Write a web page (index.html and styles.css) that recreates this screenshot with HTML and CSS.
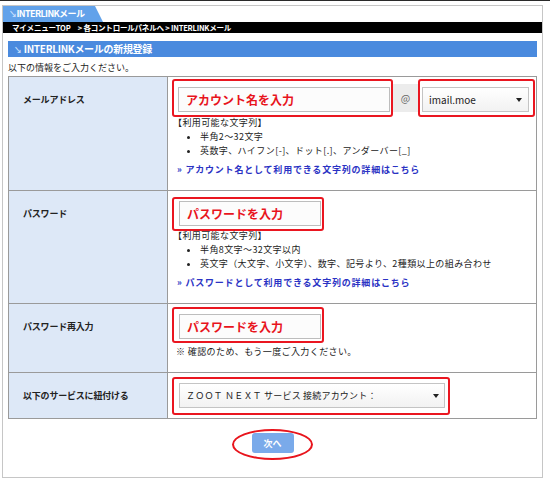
FILE: index.html
```html
<!DOCTYPE html>
<html lang="ja">
<head>
<meta charset="utf-8">
<title>INTERLINKメール</title>
<link rel="stylesheet" href="styles.css">
</head>
<body>
<div class="frame">
  <div class="tab"><span class="arr">↘</span>INTERLINKメール</div>
  <div class="crumb">マイメニューTOP　&gt; 各コントロールパネルへ &gt; INTERLINKメール</div>
  <div class="content">
    <h2 class="head"><span class="arr">↘</span> INTERLINKメールの新規登録</h2>
    <p class="intro">以下の情報をご入力ください。</p>
    <table class="form">
      <colgroup><col class="c-label"><col></colgroup>
      <tr class="r1">
        <th>メールアドレス</th>
        <td>
          <div class="group">
            <span class="red red-acc"><span class="inp inp-acc">アカウント名を入力</span></span>
            <span class="addon">@</span>
            <span class="red red-dom"><span class="select sel-dom">imail.moe<i class="caret"></i></span></span>
          </div>
          <div class="rules">【利用可能な文字列】</div>
          <ul class="list">
            <li>半角2～32文字</li>
            <li>英数字、ハイフン[-]、ドット[.]、アンダーバー[_]</li>
          </ul>
          <a class="more" href="#">» アカウント名として利用できる文字列の詳細はこちら</a>
        </td>
      </tr>
      <tr class="r2">
        <th>パスワード</th>
        <td>
          <span class="red red-pw"><span class="inp inp-pw">パスワードを入力</span></span>
          <div class="rules">【利用可能な文字列】</div>
          <ul class="list">
            <li>半角8文字～32文字以内</li>
            <li>英文字（大文字、小文字）、数字、記号より、2種類以上の組み合わせ</li>
          </ul>
          <a class="more" href="#">» パスワードとして利用できる文字列の詳細はこちら</a>
        </td>
      </tr>
      <tr class="r3">
        <th>パスワード再入力</th>
        <td>
          <span class="red red-pw2"><span class="inp inp-pw">パスワードを入力</span></span>
          <div class="note">※ 確認のため、もう一度ご入力ください。</div>
        </td>
      </tr>
      <tr class="r4">
        <th>以下のサービスに紐付ける</th>
        <td>
          <span class="red red-svc"><span class="select sel-svc">ＺＯＯＴ ＮＥＸＴ サービス 接続アカウント：<i class="caret"></i></span></span>
        </td>
      </tr>
    </table>
    <div class="actions">
      <span class="btnwrap"><button class="next" type="button">次へ</button><span class="ring"></span></span>
    </div>
  </div>
</div>
</body>
</html>
```
FILE: styles.css
```css
html, body {
  margin: 0;
  padding: 0;
  background: #fff;
}
body {
  border-top: 1px solid #2a2a2a;
  font-family: "Noto Sans CJK JP", "Noto Sans", sans-serif;
  color: #222;
}
.frame {
  margin: 4px 7px 0 2px;
  height: 473px;
  box-sizing: border-box;
  border: 1px solid #c6c6c6;
}
.tab {
  width: 100px;
  height: 16px;
  line-height: 16px;
  background: #62a2ea;
  color: #fff;
  font-size: 9px;
  font-weight: bold;
  padding-left: 6px;
  box-sizing: border-box;
  clip-path: polygon(0 0, 92px 0, 100% 100%, 0 100%);
  letter-spacing: -0.6px;
}
.arr {
  color: #cfe3ff;
  font-size: 8px;
}
.crumb {
  height: 11px;
  line-height: 11px;
  background: #000;
  color: #fff;
  font-size: 7.5px;
  font-weight: bold;
  padding-left: 9px;
  white-space: nowrap;
  letter-spacing: -0.2px;
}
.content {
  padding: 0 5px;
}
.head {
  margin: 8px 0 0;
  height: 16px;
  line-height: 16px;
  background: #4a8ade;
  color: #fff;
  font-size: 10px;
  font-weight: bold;
  padding-left: 6px;
  letter-spacing: -0.3px;
}
.intro {
  margin: 0;
  padding: 5px 0 2px;
  font-size: 9px;
  line-height: 12px;
}
.form {
  width: 100%;
  table-layout: fixed;
  border-collapse: collapse;
  border: 1px solid #8c8c8c;
}
.c-label {
  width: 159px;
}
.form th, .form td {
  border: 1px solid #9a9a9a;
  vertical-align: top;
}
.form th {
  padding: 17px 0 0 14px;
  text-align: left;
  background: #dde8f7;
  font-size: 9px;
  line-height: 12px;
  font-weight: bold;
  color: #222;
  letter-spacing: -0.2px;
  white-space: nowrap;
}
.form td {
  padding: 2px 2px 13px 4px;
  font-size: 9px;
  line-height: 14px;
  letter-spacing: 0.4px;
}
.form .r4 td {
  padding-bottom: 3px;
}
.group {
  display: flex;
  align-items: center;
}
.red {
  display: inline-flex;
  flex-shrink: 0;
  border: 2px solid #ea1620;
  border-radius: 3px;
  vertical-align: top;
  letter-spacing: 0;
}
.red-acc { padding: 6px 1px 3px 4px; }
.red-dom { padding: 6px 4px 3px 2px; }
.red-pw { padding: 2px 1px 3px 5px; margin-top: 4px; }
.red-pw2 { padding: 5px 1px 2px 5px; margin-top: 1px; }
.red-svc { padding: 4px 3px 5px 5px; margin-top: 2px; }
.inp {
  height: 25px;
  line-height: 23px;
  box-sizing: border-box;
  border: 1px solid #bdbdbd;
  background: #fcfcfc;
  color: #e8141c;
  font-size: 12px;
  font-weight: bold;
  padding-left: 7px;
  white-space: nowrap;
}
.inp-acc { width: 212px; }
.inp-pw { width: 142px; }
.addon {
  flex-shrink: 0;
  width: 25px;
  height: 28px;
  line-height: 28px;
  background: #ececec;
  color: #666;
  font-size: 10px;
  text-align: center;
  letter-spacing: 0;
}
.select {
  position: relative;
  height: 25px;
  line-height: 23px;
  box-sizing: border-box;
  border: 1px solid #c4c4c4;
  background: linear-gradient(#ffffff, #f2f2f2);
  color: #222;
  padding-left: 6px;
  white-space: nowrap;
}
.sel-dom {
  width: 107px;
  font-size: 10px;
}
.sel-svc {
  width: 266px;
  font-size: 9px;
  letter-spacing: 0.2px;
}
.caret {
  position: absolute;
  right: 6px;
  top: 10px;
  width: 0;
  height: 0;
  border-left: 3px solid transparent;
  border-right: 3px solid transparent;
  border-top: 4px solid #222;
}
.sel-svc .caret { right: 5px; }
.rules {
  margin-top: -1px;
  padding-left: 1px;
}
.r2 .rules { margin-top: -2px; }
.list {
  margin: 0;
  padding-left: 28px;
  list-style: disc;
}
.more {
  display: block;
  margin-top: 5px;
  padding-left: 5px;
  color: #2b33c4;
  text-decoration: none;
  font-weight: bold;
  letter-spacing: 0.8px;
}
.note {
  margin-top: 2px;
  padding-left: 4px;
}
.actions {
  display: flex;
  justify-content: center;
  margin-top: 14px;
}
.btnwrap {
  position: relative;
  display: inline-block;
}
.next {
  display: block;
  width: 42px;
  height: 20px;
  border: none;
  border-radius: 3px;
  background: #7aaaea;
  color: #fff;
  font-family: "Noto Sans CJK JP", sans-serif;
  font-size: 9px;
  font-weight: bold;
  padding: 0;
}
.ring {
  position: absolute;
  left: -20px;
  top: -4px;
  width: 81px;
  height: 31px;
  box-sizing: border-box;
  border: 2px solid #e8141c;
  border-radius: 50%;
}
```
